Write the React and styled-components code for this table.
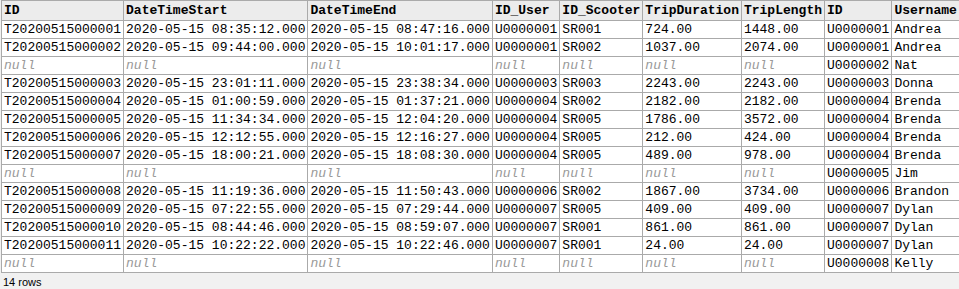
import React from "react";
import styled, { createGlobalStyle } from "styled-components";

const Global = createGlobalStyle`
  html, body { margin: 0; padding: 0; background: #f1f1f1; }
`;

const Wrap = styled.div`
  padding: 0 0 0 1px;
`;

const Table = styled.table`
  border-collapse: collapse;
  font-family: "Liberation Mono", "Courier New", monospace;
  font-size: 13px;
  color: #000;
  background: #fff;
`;

const Th = styled.th`
  border: 1px solid #aaa;
  background: #ececec;
  text-align: left;
  font-weight: bold;
  padding: 2px 2px 1px 2px;
  line-height: 16px;
  white-space: nowrap;
`;

const Td = styled.td`
  border: 1px solid #aaa;
  padding: 1px 2px 0 2px;
  line-height: 16px;
  white-space: nowrap;
  color: ${(p) => (p.$null ? "#999" : "#000")};
  font-style: ${(p) => (p.$null ? "italic" : "normal")};
`;

const Footer = styled.div`
  font-family: "Liberation Sans", Arial, sans-serif;
  font-size: 11px;
  color: #000;
  padding: 3px 0 0 2px;
`;

const cols = ["ID", "DateTimeStart", "DateTimeEnd", "ID_User", "ID_Scooter", "TripDuration", "TripLength", "ID", "Username"];

const N = null;
const rows = [
  ["T20200515000001", "2020-05-15 08:35:12.000", "2020-05-15 08:47:16.000", "U0000001", "SR001", "724.00", "1448.00", "U0000001", "Andrea"],
  ["T20200515000002", "2020-05-15 09:44:00.000", "2020-05-15 10:01:17.000", "U0000001", "SR002", "1037.00", "2074.00", "U0000001", "Andrea"],
  [N, N, N, N, N, N, N, "U0000002", "Nat"],
  ["T20200515000003", "2020-05-15 23:01:11.000", "2020-05-15 23:38:34.000", "U0000003", "SR003", "2243.00", "2243.00", "U0000003", "Donna"],
  ["T20200515000004", "2020-05-15 01:00:59.000", "2020-05-15 01:37:21.000", "U0000004", "SR002", "2182.00", "2182.00", "U0000004", "Brenda"],
  ["T20200515000005", "2020-05-15 11:34:34.000", "2020-05-15 12:04:20.000", "U0000004", "SR005", "1786.00", "3572.00", "U0000004", "Brenda"],
  ["T20200515000006", "2020-05-15 12:12:55.000", "2020-05-15 12:16:27.000", "U0000004", "SR005", "212.00", "424.00", "U0000004", "Brenda"],
  ["T20200515000007", "2020-05-15 18:00:21.000", "2020-05-15 18:08:30.000", "U0000004", "SR005", "489.00", "978.00", "U0000004", "Brenda"],
  [N, N, N, N, N, N, N, "U0000005", "Jim"],
  ["T20200515000008", "2020-05-15 11:19:36.000", "2020-05-15 11:50:43.000", "U0000006", "SR002", "1867.00", "3734.00", "U0000006", "Brandon"],
  ["T20200515000009", "2020-05-15 07:22:55.000", "2020-05-15 07:29:44.000", "U0000007", "SR005", "409.00", "409.00", "U0000007", "Dylan"],
  ["T20200515000010", "2020-05-15 08:44:46.000", "2020-05-15 08:59:07.000", "U0000007", "SR001", "861.00", "861.00", "U0000007", "Dylan"],
  ["T20200515000011", "2020-05-15 10:22:22.000", "2020-05-15 10:22:46.000", "U0000007", "SR001", "24.00", "24.00", "U0000007", "Dylan"],
  [N, N, N, N, N, N, N, "U0000008", "Kelly"],
];

export default function App() {
  return (
    <Wrap>
      <Global />
      <Table>
        <thead>
          <tr>
            {cols.map((c, i) => (
              <Th key={i}>{c}</Th>
            ))}
          </tr>
        </thead>
        <tbody>
          {rows.map((r, i) => (
            <tr key={i}>
              {r.map((v, j) => (
                <Td key={j} $null={v === null}>
                  {v === null ? "null" : v}
                </Td>
              ))}
            </tr>
          ))}
        </tbody>
      </Table>
      <Footer>14 rows</Footer>
    </Wrap>
  );
}
